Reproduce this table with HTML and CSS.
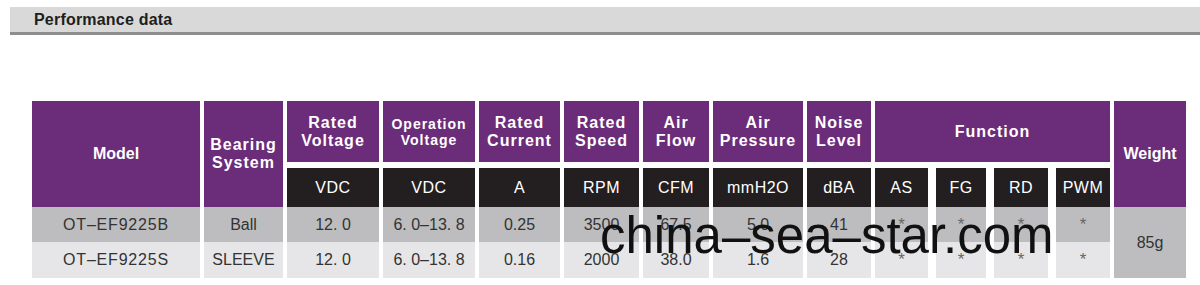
FILE: index.html
```html
<!DOCTYPE html>
<html lang="en">
<head>
<meta charset="utf-8">
<title>Performance data</title>
<link rel="stylesheet" href="styles.css">
</head>
<body>
<div class="section-bar"><h2 class="section-title">Performance data</h2></div>
<div class="perf-table">
  <div class="hd hd-tall">Model</div>
  <div class="hd hd-tall hd-sp">Bearing<br>System</div>
  <div class="hd hd-sp">Rated<br>Voltage</div>
  <div class="hd hd-sp hd-small">Operation<br>Voltage</div>
  <div class="hd hd-sp">Rated<br>Current</div>
  <div class="hd hd-sp">Rated<br>Speed</div>
  <div class="hd hd-sp">Air<br>Flow</div>
  <div class="hd hd-sp">Air<br>Pressure</div>
  <div class="hd hd-sp">Noise<br>Level</div>
  <div class="hd hd-sp hd-func">Function</div>
  <div class="hd hd-tall">Weight</div>

  <div class="unit">VDC</div>
  <div class="unit">VDC</div>
  <div class="unit">A</div>
  <div class="unit">RPM</div>
  <div class="unit">CFM</div>
  <div class="unit">mmH2O</div>
  <div class="unit">dBA</div>
  <div class="unit fn">AS</div>
  <div class="unit fn">FG</div>
  <div class="unit fn">RD</div>
  <div class="unit">PWM</div>

  <div class="cell r1 model">OT–EF9225B</div>
  <div class="cell r1">Ball</div>
  <div class="cell r1">12. 0</div>
  <div class="cell r1">6. 0–13. 8</div>
  <div class="cell r1">0.25</div>
  <div class="cell r1">3500</div>
  <div class="cell r1">67.5</div>
  <div class="cell r1">5.0</div>
  <div class="cell r1">41</div>
  <div class="cell r1 fn star">*</div>
  <div class="cell r1 fn star">*</div>
  <div class="cell r1 fn star">*</div>
  <div class="cell r1 star">*</div>
  <div class="cell r1 weight">85g</div>

  <div class="cell r2 model">OT–EF9225S</div>
  <div class="cell r2">SLEEVE</div>
  <div class="cell r2">12. 0</div>
  <div class="cell r2">6. 0–13. 8</div>
  <div class="cell r2">0.16</div>
  <div class="cell r2">2000</div>
  <div class="cell r2">38.0</div>
  <div class="cell r2">1.6</div>
  <div class="cell r2">28</div>
  <div class="cell r2 fn star">*</div>
  <div class="cell r2 fn star">*</div>
  <div class="cell r2 fn star">*</div>
  <div class="cell r2 star">*</div>
</div>
<div class="watermark">china–sea–star.com</div>
</body>
</html>
```
FILE: styles.css
```css
html, body {
  margin: 0;
  padding: 0;
  background: #ffffff;
}
body {
  position: relative;
  width: 1200px;
  height: 285px;
  overflow: hidden;
  font-family: "Liberation Sans", Arial, sans-serif;
}
.section-bar {
  margin: 7px 0 0 10px;
  height: 25px;
  background: #d9d9d9;
  border-bottom: 3px solid #8e8e8e;
  display: flex;
  align-items: center;
  padding-left: 24px;
}
.section-title {
  margin: 0;
  font-size: 16px;
  font-weight: bold;
  color: #1e1e1e;
  letter-spacing: 0.2px;
}
.perf-table {
  margin: 66px 0 0 32px;
  display: grid;
  grid-template-columns: 168px 79px 92px 92px 81px 75px 66px 90px 64px 57px 54px 58px 54px 72px;
  grid-template-rows: 61px 45px 35px 36px;
  column-gap: 4px;
  width: 1154px;
}
.hd {
  background: #6b2c79;
  color: #ffffff;
  font-weight: bold;
  font-size: 16px;
  line-height: 18px;
  display: flex;
  align-items: center;
  justify-content: center;
  text-align: center;
}
.hd-sp {
  letter-spacing: 1px;
}
.hd-tall {
  grid-row: span 2;
}
.hd-small {
  font-size: 14px;
  line-height: 16px;
}
.hd-func {
  grid-column: span 4;
}
.unit {
  margin-top: 6px;
  background: #231f20;
  color: #ffffff;
  font-size: 16px;
  letter-spacing: 0.5px;
  display: flex;
  align-items: center;
  justify-content: center;
}
.fn {
  margin-right: 4px;
}
.cell {
  color: #333333;
  font-size: 16px;
  display: flex;
  align-items: center;
  justify-content: center;
}
.r1 {
  background: #bdbdbf;
}
.r2 {
  background: #e6e6e8;
}
.model {
  letter-spacing: 0.8px;
}
.star {
  color: #666666;
  font-size: 17px;
}
.weight {
  grid-row: span 2;
  background: #bdbdbf;
}
.watermark {
  position: absolute;
  left: 600px;
  top: 210px;
  font-family: "Liberation Sans", Arial, sans-serif;
  font-size: 51px;
  line-height: 51px;
  color: #111111;
  white-space: nowrap;
}
```
